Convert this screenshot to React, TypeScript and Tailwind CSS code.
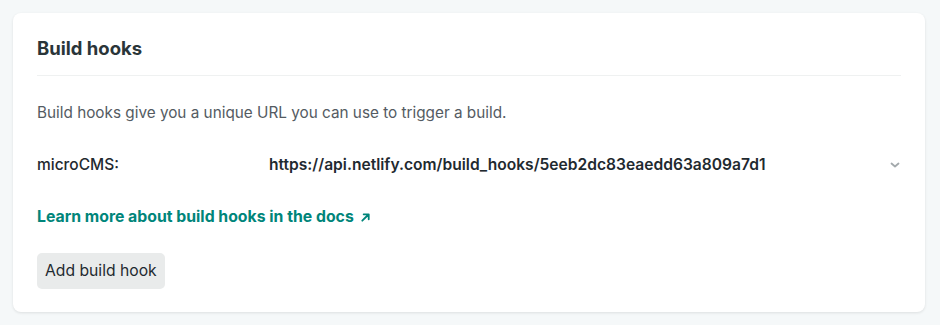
export default function App() {
  return (
    <div
      className="min-h-screen bg-[#f5f8f9] pt-[13px] pl-[13px] pr-[15px]"
      style={{ fontFamily: 'Inter, "Noto Sans", sans-serif' }}
    >
      <section className="bg-white rounded-lg shadow-[0_1px_3px_rgba(0,0,0,0.1)] px-6 pt-[23px] pb-[23px]">
        {/* Header */}
        <h2 className="text-[18.5px] font-bold text-[#2a3539] leading-6 pb-[15px] border-b border-[#eff1f1]">
          Build hooks
        </h2>

        <p className="mt-[25px] text-[15.3px] text-[#545b62] leading-6">
          Build hooks give you a unique URL you can use to trigger a build.
        </p>

        {/* Hook list */}
        <div className="mt-[28px] flex items-center leading-6 text-[#1f2a30]">
          <span className="w-[232px] font-medium text-[15.5px]">microCMS:</span>
          <span className="flex-1 font-semibold text-[15.6px]">
            https://api.netlify.com/build_hooks/5eeb2dc83eaedd63a809a7d1
          </span>
          <svg className="w-[10px] h-[10px] mr-[1px] text-[#a3a9ac]" viewBox="0 0 10 10" fill="none" stroke="currentColor">
            <path d="M1.5 3.5 5 6.5 8.5 3.5" strokeWidth={1.8} strokeLinecap="round" strokeLinejoin="round" />
          </svg>
        </div>

        <a
          href="#"
          className="mt-[28px] inline-flex items-center gap-[6px] text-[15.8px] font-bold text-[#00857a] leading-6"
        >
          Learn more about build hooks in the docs
          <svg className="w-[11px] h-[11px]" viewBox="0 0 12 12" fill="none" stroke="currentColor">
            <path d="M2.5 9.5 9 3M4 2.5h5.5V8" strokeWidth={2} strokeLinecap="round" strokeLinejoin="round" />
          </svg>
        </a>

        <div className="mt-[24px]">
          <button className="bg-[#e9ebeb] rounded-[5px] px-2 h-9 text-[15.7px] text-[#1f2a30]">
            Add build hook
          </button>
        </div>
      </section>
    </div>
  )
}
